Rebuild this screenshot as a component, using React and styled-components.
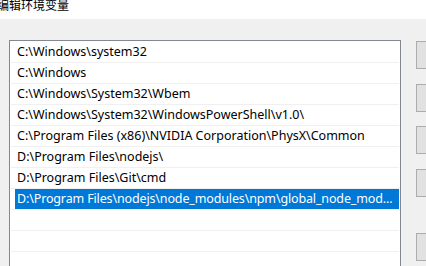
import React from "react";
import styled, { createGlobalStyle } from "styled-components";

const Global = createGlobalStyle`
  html, body { margin: 0; padding: 0; background: #f0f0f0; overflow: hidden; }
  * { box-sizing: border-box; }
`;

const Window = styled.div`
  width: 426px;
  height: 266px;
  overflow: hidden;
  background: #f0f0f0;
  font-family: "Noto Sans CJK SC", "Noto Sans", sans-serif;
  font-size: 12px;
  color: #000;
`;

const TitleBar = styled.div`
  height: 19px;
  background: #ffffff;
  overflow: hidden;
`;

const Title = styled.div`
  margin: -1px 0 0 -3px;
  line-height: 12px;
  font-size: 12px;
  white-space: nowrap;
`;

const Body = styled.div`
  display: flex;
  align-items: flex-start;
  padding: 21px 0 0 9px;
`;

const List = styled.div`
  width: 392px;
  height: 240px;
  flex: none;
  background: #ffffff;
  border: 1px solid #828790;
  border-bottom: none;
  padding-top: 1px;
`;

const Row = styled.div`
  height: 21px;
  margin: 0 1px;
  border-bottom: 1px solid #f0f0f0;
  display: flex;
`;

const Cell = styled.div`
  flex: 1;
  min-width: 0;
  margin-left: 4px;
  padding-left: 2px;
  height: 20px;
  line-height: 20px;
  font-family: "Noto Sans", "Noto Sans CJK SC", sans-serif;
  font-size: 12.5px;
  letter-spacing: ${(p) => (p.$selected ? "-0.14px" : "0")};
  white-space: nowrap;
  overflow: hidden;
  background: ${(p) => (p.$selected ? "#0078d7" : "transparent")};
  color: ${(p) => (p.$selected ? "#ffffff" : "#000000")};
`;

const Buttons = styled.div`
  display: flex;
  flex-direction: column;
  margin-left: 15px;
  padding-top: 1px;
`;

const Button = styled.div`
  width: 75px;
  height: 28px;
  margin-top: ${(p) => p.$mt}px;
  background: #e1e1e1;
  border: 1px solid #adadad;
`;

const paths = [
  "C:\\Windows\\system32",
  "C:\\Windows",
  "C:\\Windows\\System32\\Wbem",
  "C:\\Windows\\System32\\WindowsPowerShell\\v1.0\\",
  "C:\\Program Files (x86)\\NVIDIA Corporation\\PhysX\\Common",
  "D:\\Program Files\\nodejs\\",
  "D:\\Program Files\\Git\\cmd",
  "D:\\Program Files\\nodejs\\node_modules\\npm\\global_node_mod...",
  "",
  "",
  "",
];

export default function App() {
  return (
    <>
      <Global />
      <Window>
        <TitleBar>
          <Title>编辑环境变量</Title>
        </TitleBar>
        <Body>
          <List>
            {paths.map((p, i) => (
              <Row key={i}>
                <Cell $selected={i === 7}>{p}</Cell>
              </Row>
            ))}
          </List>
          <Buttons>
            <Button $mt={0} />
            <Button $mt={15} />
            <Button $mt={14} />
            <Button $mt={15} />
            <Button $mt={36} />
          </Buttons>
        </Body>
      </Window>
    </>
  );
}
